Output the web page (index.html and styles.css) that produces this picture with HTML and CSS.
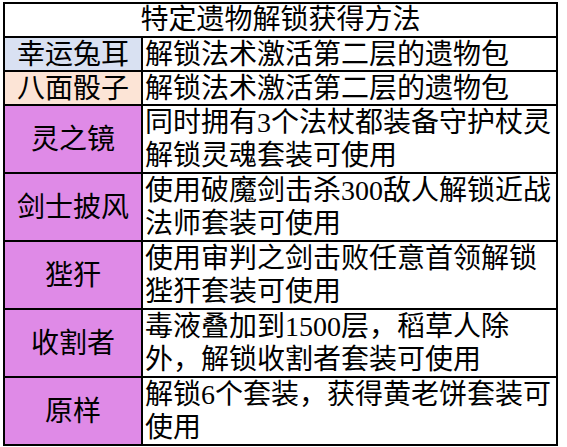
FILE: index.html
```html
<!DOCTYPE html>
<html lang="zh-CN">
<head>
<meta charset="utf-8">
<title>特定遗物解锁获得方法</title>
<link rel="stylesheet" href="styles.css">
</head>
<body>
<div class="sheet">
  <div class="cell head">特定遗物解锁获得方法</div>

  <div class="cell name blue">幸运兔耳</div>
  <div class="cell desc">解锁法术激活第二层的遗物包</div>

  <div class="cell name peach">八面骰子</div>
  <div class="cell desc">解锁法术激活第二层的遗物包</div>

  <div class="cell name purple">灵之镜</div>
  <div class="cell desc">同时拥有3个法杖都装备守护杖灵解锁灵魂套装可使用</div>

  <div class="cell name purple">剑士披风</div>
  <div class="cell desc">使用破魔剑击杀300敌人解锁近战法师套装可使用</div>

  <div class="cell name purple">狴犴</div>
  <div class="cell desc">使用审判之剑击败任意首领解锁狴犴套装可使用</div>

  <div class="cell name purple">收割者</div>
  <div class="cell desc">毒液叠加到1500层，稻草人除外，解锁收割者套装可使用</div>

  <div class="cell name purple">原样</div>
  <div class="cell desc">解锁6个套装，获得黄老饼套装可使用</div>
</div>
</body>
</html>
```

FILE: styles.css
```css
html, body {
  margin: 0;
  padding: 0;
  background: #ffffff;
}

body {
  font-family: "Liberation Serif", "Noto Sans CJK SC", serif;
  font-size: 28px;
  color: #000000;
}

.sheet {
  margin: 2px 0 0 3px;
  width: 555px;
  box-sizing: border-box;
  display: grid;
  grid-template-columns: 136px 413px;
  grid-template-rows: 32px 32px 32px 66px 66px 66px 66px 66px;
  gap: 2px;
  padding: 2px;
  background: #000000;
}

.cell {
  background: #ffffff;
  line-height: 33px;
  overflow: hidden;
}

.head {
  grid-column: 1 / 3;
  text-align: center;
  line-height: 32px;
}

.name {
  display: flex;
  align-items: center;
  justify-content: center;
}

.desc {
  padding-left: 2px;
}

.blue { background: #d9e1f2; }
.peach { background: #fce4d6; }
.purple { background: #df8ae7; }
```
